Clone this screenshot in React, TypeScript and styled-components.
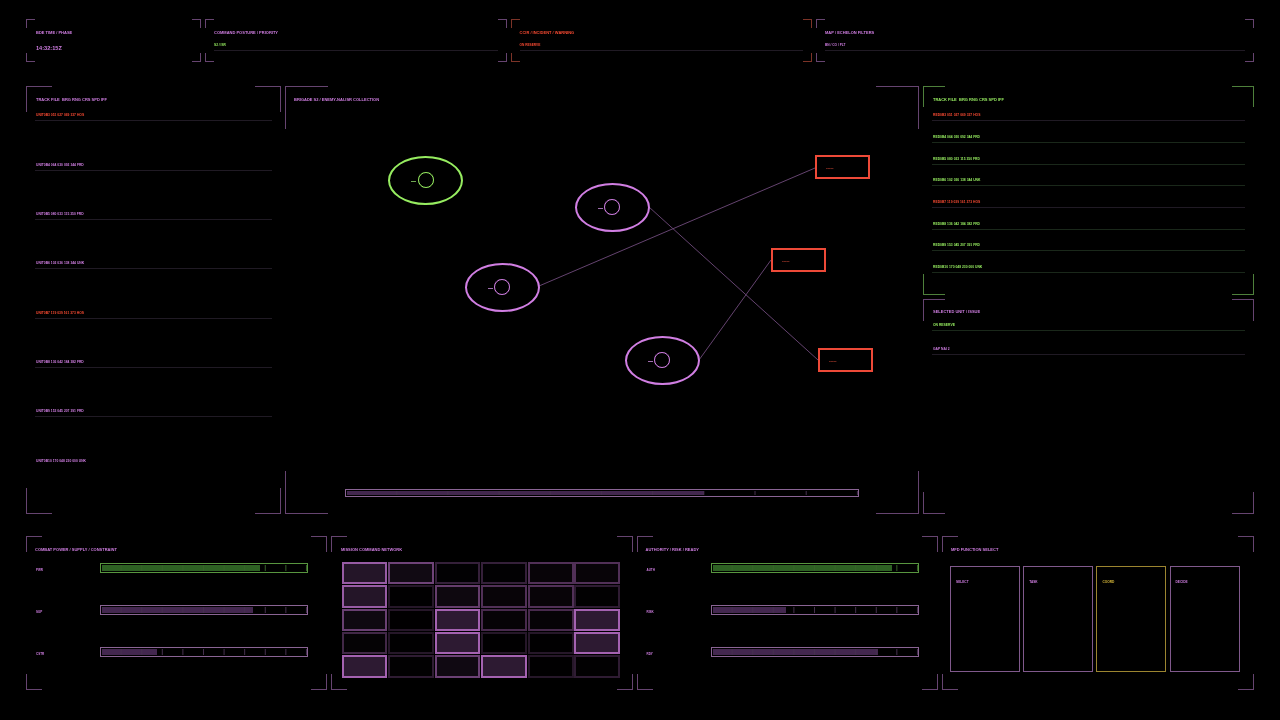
import React from "react";
import styled, { createGlobalStyle, css } from "styled-components";

type Tone = "purple" | "green" | "red" | "gold";
const TEXT: Record<Tone, string> = { purple: "#d07ee2", green: "#96ec60", red: "#f84a32", gold: "#dcbc3a" };
const EDGE: Record<Tone, string> = { purple: "#664470", green: "#4e803b", red: "#7c3327", gold: "#8f7a2d" };

const Global = createGlobalStyle`
  html, body { margin: 0; padding: 0; background: #000; }
  * { box-sizing: border-box; }
  body { font-family: "Liberation Sans", Arial, sans-serif; }
`;

const Page = styled.div`
  width: 1280px;
  height: 720px;
  padding: 19px 26px 0;
  display: flex;
  flex-direction: column;
  overflow: hidden;
  background: #000;
  filter: blur(0.6px);
`;
const TopRow = styled.div`
  display: grid;
  grid-template-columns: 175px 301.5px 301.5px 438px;
  gap: 4px;
  height: 42.5px;
`;
const MiddleRow = styled.div`
  display: grid;
  grid-template-columns: 255px 634px 331px;
  gap: 4px;
  height: 428px;
  margin-top: 24.5px;
`;
const BottomRow = styled.div`
  display: grid;
  grid-template-columns: 301px 301.5px 301.5px 312px;
  gap: 4px;
  height: 154px;
  margin-top: 22px;
`;
const Stack = styled.div`
  display: flex;
  flex-direction: column;
  gap: 4px;
`;

const PanelBox = styled.section<{ $grow?: boolean; $h?: number; $pad: string }>`
  position: relative;
  display: flex;
  flex-direction: column;
  padding: ${(p) => p.$pad};
  ${(p) => (p.$grow ? "flex: 1;" : "")}
  ${(p) => (p.$h ? `height: ${p.$h}px;` : "")}
`;
const CornerMark = styled.i<{ $at: string; $w: number; $h: number; $tone: Tone }>`
  position: absolute;
  width: ${(p) => p.$w}px;
  height: ${(p) => p.$h}px;
  border: 0 solid ${(p) => EDGE[p.$tone]};
  ${(p) => (p.$at[0] === "t" ? "top: 0; border-top-width: 1px;" : "bottom: 0; border-bottom-width: 1px;")}
  ${(p) => (p.$at[1] === "l" ? "left: 0; border-left-width: 1px;" : "right: 0; border-right-width: 1px;")}
`;

const Panel: React.FC<{
  w: number; h: number; tone?: Tone; pad?: string; grow?: boolean; height?: number; children?: React.ReactNode;
}> = ({ w, h, tone = "purple", pad = "11px 9px 0", grow, height, children }) => (
  <PanelBox $pad={pad} $grow={grow} $h={height}>
    {["tl", "tr", "bl", "br"].map((a) => (
      <CornerMark key={a} $at={a} $w={w} $h={h} $tone={tone} />
    ))}
    {children}
  </PanelBox>
);

const Title = styled.div<{ $tone?: Tone }>`
  height: 6px;
  line-height: 6px;
  font-size: 4px;
  font-weight: 700;
  white-space: pre;
  color: ${(p) => TEXT[p.$tone || "purple"]};
`;
const TrackHead = styled(Title)`
  padding-left: 1px;
`;
const Clock = styled.div`
  margin-top: 8.5px;
  line-height: 7px;
  font-size: 5.6px;
  font-weight: 700;
  color: ${TEXT.purple};
`;
const HeadRule = styled.div<{ $tone: Tone }>`
  margin-top: 6px;
  height: 9px;
  line-height: 7px;
  font-size: 3.2px;
  font-weight: 700;
  color: ${(p) => TEXT[p.$tone]};
  border-bottom: 1px solid #201a24;
`;
const TrackList = styled.div<{ $gap: number; $top: number }>`
  display: flex;
  flex-direction: column;
  gap: ${(p) => p.$gap}px;
  margin-top: ${(p) => p.$top}px;
`;
const TrackRow = styled.div<{ $tone: Tone; $bare?: boolean }>`
  height: 9px;
  line-height: 6px;
  font-size: 3.35px;
  font-weight: 700;
  white-space: pre;
  padding-left: 1px;
  color: ${(p) => TEXT[p.$tone]};
  border-bottom: 1px solid ${(p) => (p.$bare ? "transparent" : p.$tone === "green" ? "#1a281a" : "#201a24")};
`;

const MapCanvas = styled.div`
  position: relative;
  flex: 1;
`;
const Links = styled.svg`
  position: absolute;
  left: -9px;
  top: -17px;
  width: 634px;
  height: 428px;
`;
const Unit = styled.div<{ $x: number; $y: number; $tone: Tone }>`
  position: absolute;
  left: ${(p) => p.$x - 37.5}px;
  top: ${(p) => p.$y - 24.5}px;
  width: 75px;
  height: 49px;
  border-radius: 50%;
  border: 2px solid ${(p) => TEXT[p.$tone]};
`;
const UnitCore = styled.span<{ $tone: Tone }>`
  position: absolute;
  left: 27.5px;
  top: 14px;
  width: 16px;
  height: 16px;
  border-radius: 50%;
  border: 1px solid ${(p) => TEXT[p.$tone]};
  box-shadow: 0 0 0.6px ${(p) => TEXT[p.$tone]};
`;
const UnitTick = styled.span<{ $tone: Tone }>`
  position: absolute;
  left: 21px;
  top: 23px;
  width: 5px;
  height: 1px;
  background: ${(p) => (p.$tone === "green" ? "#6fa852" : "#a06cb0")};
`;
const Threat = styled.div<{ $x: number; $y: number }>`
  position: absolute;
  left: ${(p) => p.$x}px;
  top: ${(p) => p.$y}px;
  width: 55px;
  height: 24px;
  border: 2px solid #ee4a38;
  padding: 9.5px 0 0 9px;
  line-height: 4px;
  font-size: 4.6px;
  font-weight: 700;
  color: #f0543e;
`;

const segments = css<{ $edge: string }>`
  &::after {
    content: "";
    position: absolute;
    inset: 1px 0;
    background-image: linear-gradient(to right, transparent calc(100% - 1px), ${(p) => p.$edge} calc(100% - 1px));
    background-size: 10% 100%;
  }
`;
const Bar = styled.div<{ $tone: Tone; $edge: string; $h: number; $w: number }>`
  position: relative;
  width: ${(p) => p.$w}px;
  height: ${(p) => p.$h}px;
  padding: 1px;
  border: 1px solid ${(p) => (p.$tone === "green" ? "#58963f" : "#8a6494")};
  ${segments}
`;
const BarFill = styled.div<{ $tone: Tone }>`
  height: 100%;
  background: ${(p) => (p.$tone === "green" ? "#2e6223" : "#43274f")};
`;
const CenterBar = styled.div`
  align-self: center;
`;

const Meters = styled.div`
  display: flex;
  flex-direction: column;
  gap: 32px;
  margin-top: 10px;
`;
const MeterRow = styled.div`
  display: grid;
  grid-template-columns: 65px 208px;
  height: 10px;
`;
const MeterLabel = styled.span`
  padding: 5px 0 0 1px;
  line-height: 4px;
  font-size: 3px;
  font-weight: 700;
  color: ${TEXT.purple};
`;

const Matrix = styled.div`
  display: grid;
  grid-template-columns: repeat(6, 45.7px);
  grid-auto-rows: 22.4px;
  gap: 0.9px;
  margin: 9px 0 0 1.5px;
`;
const Cell = styled.div.attrs<{ $v: number }>((p) => ({
  style: {
    borderColor: `rgba(190, 115, 205, ${0.1 + p.$v * 0.72})`,
    background: `rgba(150, 85, 165, ${p.$v * p.$v * 0.3})`,
  },
}))<{ $v: number }>`
  border: 2px solid;
`;

const Keys = styled.div`
  display: grid;
  grid-template-columns: repeat(4, 70px);
  gap: 3.2px;
  margin: 13px 0 0 -1px;
`;
const Key = styled.div<{ $tone: Tone }>`
  height: 106px;
  border: 1px solid ${(p) => (p.$tone === "gold" ? "#9c8530" : "#80598c")};
  padding: 12.5px 0 0 5px;
  line-height: 5px;
  font-size: 3.2px;
  font-weight: 700;
  color: ${(p) => TEXT[p.$tone]};
`;

const tracks = [
  "051 027 069 337 HOS", "064 030 092 344 FRD", "080 033 115 350 FRD", "102 036 138 344 UNK",
  "119 039 161 373 HOS", "136 042 184 382 FRD", "153 045 207 391 FRD", "170 048 230 000 UNK",
];
const ids = ["3", "4", "5", "6", "7", "8", "9", "10"];
const units: { x: number; y: number; tone: Tone }[] = [
  { x: 131.5, y: 77, tone: "green" },
  { x: 318, y: 104, tone: "purple" },
  { x: 208, y: 184, tone: "purple" },
  { x: 368, y: 257, tone: "purple" },
];
const threats = [
  { x: 521, y: 52 },
  { x: 477, y: 145 },
  { x: 524, y: 245 },
];
const links = [
  [254, 200, 530, 82],
  [364, 121, 533, 274],
  [414, 274, 486, 174],
];
const matrix = [
  [0.9, 0.62, 0.24, 0.24, 0.42, 0.42],
  [0.9, 0.14, 0.55, 0.42, 0.42, 0.2],
  [0.58, 0.14, 1, 0.36, 0.36, 1],
  [0.32, 0.14, 1, 0.14, 0.14, 1],
  [1, 0.2, 0.6, 1, 0.14, 0.2],
];
const leftMeters: [string, number, Tone][] = [["PWR", 77.5, "green"], ["SUP", 74, "purple"], ["CSTR", 27, "purple"]];
const rightMeters: [string, number, Tone][] = [["AUTH", 88, "green"], ["RISK", 36, "purple"], ["RDY", 81, "purple"]];
const keys: [string, Tone][] = [["SELECT", "purple"], ["TASK", "purple"], ["COORD", "gold"], ["DECIDE", "purple"]];

const MeterSet: React.FC<{ rows: [string, number, Tone][] }> = ({ rows }) => (
  <Meters>
    {rows.map(([name, pct, tone]) => (
      <MeterRow key={name}>
        <MeterLabel>{name}</MeterLabel>
        <Bar $tone={tone} $edge={tone === "green" ? "#386229" : "#46304f"} $h={10} $w={208}>
          <BarFill $tone={tone} style={{ width: `${pct}%` }} />
        </Bar>
      </MeterRow>
    ))}
  </Meters>
);

const tracksFor = (prefix: string) => tracks.map((t, i) => `${prefix}${ids[i]} ${t}`);

export default function App() {
  return (
    <>
      <Global />
      <Page>
        <TopRow>
          <Panel w={9} h={9} pad="11px 10px 0">
            <Title>BDE TIME / PHASE</Title>
            <Clock>14:32:15Z</Clock>
          </Panel>
          <Panel w={9} h={9}>
            <Title>COMMAND POSTURE / PRIORITY</Title>
            <HeadRule $tone="green">S2 / ISR</HeadRule>
          </Panel>
          <Panel w={9} h={9} tone="red">
            <Title $tone="red">CCIR / INCIDENT / WARNING</Title>
            <HeadRule $tone="red">ON RESERVE</HeadRule>
          </Panel>
          <Panel w={9} h={9}>
            <Title>MAP / ECHELON FILTERS</Title>
            <HeadRule $tone="purple">BN / CO / PLT</HeadRule>
          </Panel>
        </TopRow>

        <MiddleRow>
          <Panel w={26} h={26}>
            <TrackHead>TRACK FILE  BRG RNG CRS SPD IFF</TrackHead>
            <TrackList $gap={40.35} $top={9.2}>
              {tracksFor("UNIT0B").map((t, i) => (
                <TrackRow key={t} $bare={i === 7} $tone={i === 0 || i === 4 ? "red" : "purple"}>{t}</TrackRow>
              ))}
            </TrackList>
          </Panel>

          <Panel w={43} h={43} pad="11px 9px 17px">
            <Title>BRIGADE S2 / ENEMY-NAI-ISR COLLECTION</Title>
            <MapCanvas>
              <Links viewBox="0 0 634 428">
                {links.map(([x1, y1, x2, y2]) => (
                  <line key={x1} x1={x1} y1={y1} x2={x2} y2={y2} stroke="#64436f" strokeWidth="1" />
                ))}
              </Links>
              {units.map((u) => (
                <Unit key={u.x} $x={u.x} $y={u.y} $tone={u.tone}>
                  <UnitTick $tone={u.tone} />
                  <UnitCore $tone={u.tone} />
                </Unit>
              ))}
              {threats.map((t) => (
                <Threat key={t.x} $x={t.x} $y={t.y}>-----</Threat>
              ))}
            </MapCanvas>
            <CenterBar>
              <Bar $tone="purple" $edge="#46304f" $h={8} $w={514}>
                <BarFill $tone="purple" style={{ width: "70%" }} />
              </Bar>
            </CenterBar>
          </Panel>

          <Stack>
            <Panel w={22} h={21} tone="green" height={208.5}>
              <TrackHead $tone="green">TRACK FILE  BRG RNG CRS SPD IFF</TrackHead>
              <TrackList $gap={12.7} $top={9.2}>
                {tracksFor("RED0B").map((t, i) => (
                  <TrackRow key={t} $tone={i === 0 || i === 4 ? "red" : "green"}>{t}</TrackRow>
                ))}
              </TrackList>
            </Panel>
            <Panel w={22} h={22} grow pad="10px 9px 0">
              <TrackHead>SELECTED UNIT / ISSUE</TrackHead>
              <TrackList $gap={15.5} $top={7}>
                <TrackRow $tone="green">ON RESERVE</TrackRow>
                <TrackRow $tone="purple">GAP NAI 2</TrackRow>
              </TrackList>
            </Panel>
          </Stack>
        </MiddleRow>

        <BottomRow>
          <Panel w={16} h={16}>
            <Title>COMBAT POWER / SUPPLY / CONSTRAINT</Title>
            <MeterSet rows={leftMeters} />
          </Panel>
          <Panel w={16} h={16}>
            <TrackHead>MISSION COMMAND NETWORK</TrackHead>
            <Matrix>
              {matrix.flat().map((v, i) => (
                <Cell key={i} $v={v} />
              ))}
            </Matrix>
          </Panel>
          <Panel w={16} h={16}>
            <Title>AUTHORITY / RISK / READY</Title>
            <MeterSet rows={rightMeters} />
          </Panel>
          <Panel w={16} h={16}>
            <Title>MFD FUNCTION SELECT</Title>
            <Keys>
              {keys.map(([name, tone]) => (
                <Key key={name} $tone={tone}>{name}</Key>
              ))}
            </Keys>
          </Panel>
        </BottomRow>
      </Page>
    </>
  );
}
